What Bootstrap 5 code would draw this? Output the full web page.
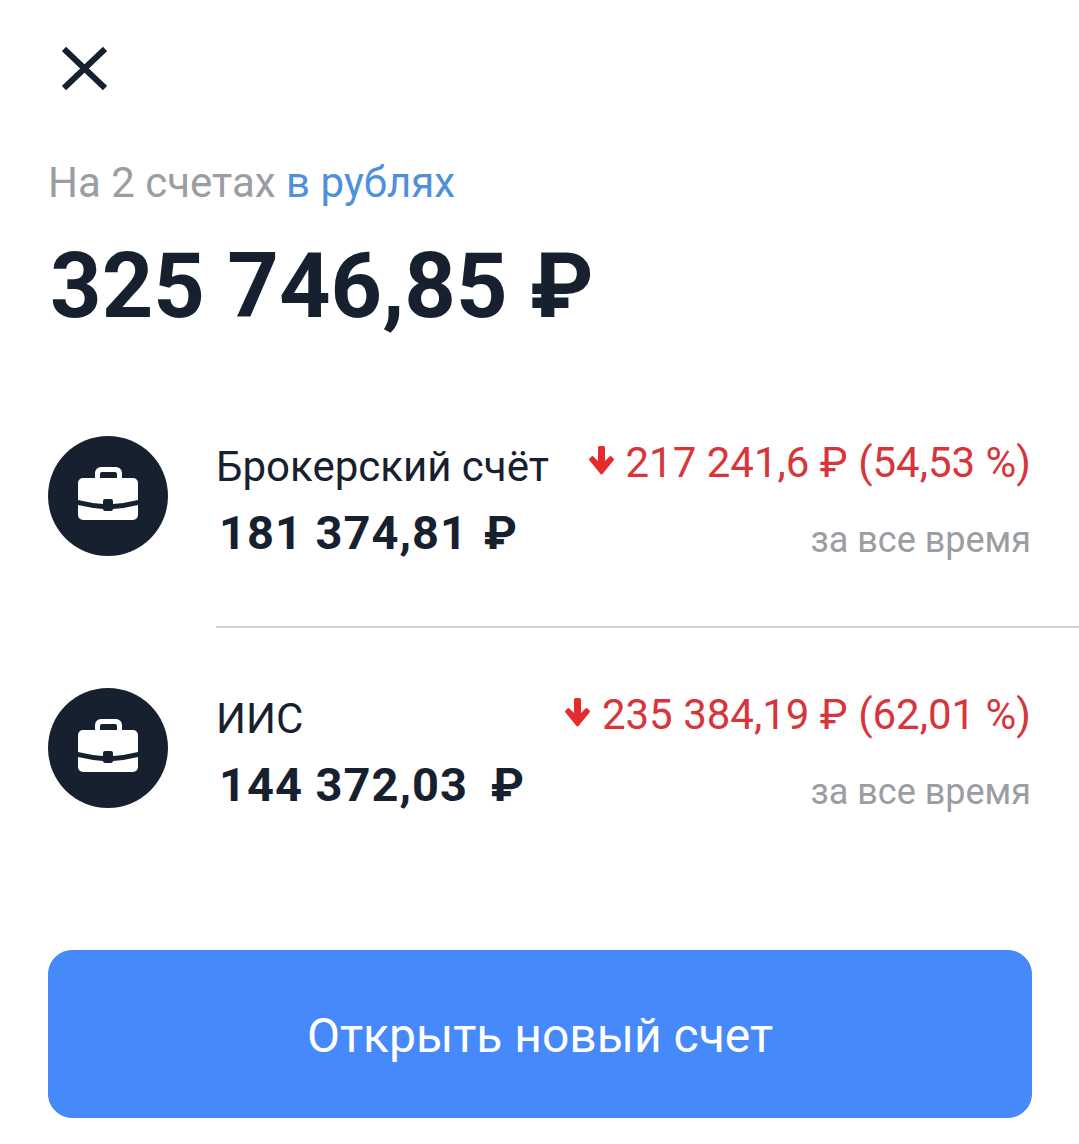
<!DOCTYPE html>
<html lang="ru">
<head>
    <meta charset="UTF-8">
    <title>Счета</title>
    <link href="https://cdn.jsdelivr.net/npm/bootstrap@5.3.2/dist/css/bootstrap.min.css" rel="stylesheet">
    <style>
        body { font-family: Roboto, "Liberation Sans", sans-serif; color: #17202e; background: #fff; }
        .screen { height: 1144px; overflow: hidden; padding-top: 46px; }
        .close-x { display: block; margin-left: 62px; width: 45px; height: 45px; }
        .summary-line { margin: 67px 0 0 48px; font-size: 42px; line-height: 50px; color: #9a9da1; }
        .summary-line a { color: #4f8fdc; text-decoration: none; }
        .total { margin: 27px 0 0 50px; font-size: 90px; line-height: 104px; font-weight: 700; }
        .accounts { margin-top: 97px; }
        .acc-row { height: 252px; padding-left: 48px; }
        .acc-row + .acc-row .acc-body { border-bottom: 0; }
        .acc-icon { width: 120px; height: 120px; background: #17202e; flex: none; margin-right: 48px; }
        .acc-icon svg { margin-bottom: 5px; }
        .acc-body { height: 192px; padding-right: 48px; border-bottom: 2px solid #cfd0d2; }
        .acc-name { font-size: 42px; line-height: 46px; margin-top: 8px; }
        .acc-sum { font-size: 47px; line-height: 54px; font-weight: 700; margin: 16px 0 0 3px; letter-spacing: 1px; }
        .rub-gap { margin-left: 3px; }
        .rub-gap-wide { margin-left: 10px; }
        .acc-change { font-size: 42px; line-height: 48px; color: #d8353a; margin-top: 3px; }
        .acc-change svg { margin-right: 1px; vertical-align: 2px; }
        .acc-period { font-size: 36px; line-height: 40px; color: #9a9da1; margin-top: 33px; }
        .open-btn { display: block; width: 984px; height: 168px; margin: 10px 0 0 48px; padding-top: 10px; border-radius: 24px;
            background: #4689fb; border-color: #4689fb; color: #fff; font-size: 48px; }
    </style>
</head>
<body>
<div class="screen">
    <svg class="close-x" viewBox="0 0 45 45" fill="none" stroke="#17202e" stroke-width="6"><path d="M2 3l41 39M43 3L2 42"/></svg>
    <p class="summary-line">На 2 счетах <a href="#">в рублях</a></p>
    <div class="total">325 746,85 ₽</div>

    <div class="accounts">
        <div class="acc-row d-flex">
            <div class="acc-icon rounded-circle d-flex align-items-center justify-content-center">
                <svg width="60" height="53" viewBox="0 0 60 53"><path fill="#fff" fill-rule="evenodd" d="M17 6a6 6 0 0 1 6-6h15a6 6 0 0 1 6 6v5h11a5 5 0 0 1 5 5v17q-12 3-25 4v-3a2 2 0 0 0-2-2h-6a2 2 0 0 0-2 2v3q-13-1-25-4V16a5 5 0 0 1 5-5h12zM22 7v4h17V7a2 2 0 0 0-2-2H24a2 2 0 0 0-2 2zM0 38q13 3 25 4a2 2 0 0 0 2 2h6a2 2 0 0 0 2-2q13-1 25-4v10a5 5 0 0 1-5 5H5a5 5 0 0 1-5-5z"/></svg>
            </div>
            <div class="acc-body flex-grow-1 d-flex justify-content-between">
                <div>
                    <div class="acc-name">Брокерский счёт</div>
                    <div class="acc-sum">181 374,81 <span class="rub-gap">₽</span></div>
                </div>
                <div class="text-end">
                    <div class="acc-change"><svg width="25" height="29" viewBox="0 0 25 29"><path fill="#e52b2b" d="M9 1.500a1.500 1.500 0 0 1 1.500-1.500h4a1.500 1.500 0 0 1 1.500 1.500V15l4.500-4.500a1.500 1.500 0 0 1 2 0l2 2a1.500 1.500 0 0 1 0 2L13.500 28a1.500 1.500 0 0 1-2 0L.5 14.500a1.500 1.500 0 0 1 0-2l2-2a1.500 1.500 0 0 1 2 0L9 15z"/></svg> 217 241,6 ₽ (54,53 %)</div>
                    <div class="acc-period">за все время</div>
                </div>
            </div>
        </div>
        <div class="acc-row d-flex">
            <div class="acc-icon rounded-circle d-flex align-items-center justify-content-center">
                <svg width="60" height="53" viewBox="0 0 60 53"><path fill="#fff" fill-rule="evenodd" d="M17 6a6 6 0 0 1 6-6h15a6 6 0 0 1 6 6v5h11a5 5 0 0 1 5 5v17q-12 3-25 4v-3a2 2 0 0 0-2-2h-6a2 2 0 0 0-2 2v3q-13-1-25-4V16a5 5 0 0 1 5-5h12zM22 7v4h17V7a2 2 0 0 0-2-2H24a2 2 0 0 0-2 2zM0 38q13 3 25 4a2 2 0 0 0 2 2h6a2 2 0 0 0 2-2q13-1 25-4v10a5 5 0 0 1-5 5H5a5 5 0 0 1-5-5z"/></svg>
            </div>
            <div class="acc-body flex-grow-1 d-flex justify-content-between">
                <div>
                    <div class="acc-name">ИИС</div>
                    <div class="acc-sum">144 372,03 <span class="rub-gap-wide">₽</span></div>
                </div>
                <div class="text-end">
                    <div class="acc-change"><svg width="25" height="29" viewBox="0 0 25 29"><path fill="#e52b2b" d="M9 1.500a1.500 1.500 0 0 1 1.500-1.500h4a1.500 1.500 0 0 1 1.500 1.500V15l4.500-4.500a1.500 1.500 0 0 1 2 0l2 2a1.500 1.500 0 0 1 0 2L13.500 28a1.500 1.500 0 0 1-2 0L.5 14.500a1.500 1.500 0 0 1 0-2l2-2a1.500 1.500 0 0 1 2 0L9 15z"/></svg> 235 384,19 ₽ (62,01 %)</div>
                    <div class="acc-period">за все время</div>
                </div>
            </div>
        </div>
    </div>

    <button type="button" class="btn btn-primary open-btn">Открыть новый счет</button>
</div>
<script src="https://cdn.jsdelivr.net/npm/bootstrap@5.3.2/dist/js/bootstrap.bundle.min.js"></script>
</body>
</html>
